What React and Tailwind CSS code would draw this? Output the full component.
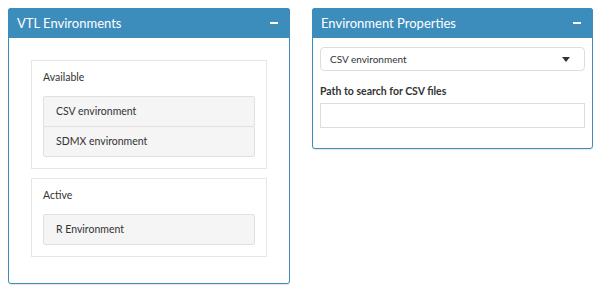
import React from "react";

function Box({ title, className, children }) {
  return (
    <div className={"bg-white border border-[#3c8dbc] rounded-[3px] shadow-[0_1px_1px_rgba(0,0,0,0.1)] " + className}>
      <div className="h-[30px] -mt-px -mx-px bg-[#3c8dbc] rounded-t-[3px] flex items-center justify-between pl-[9px] pr-[12px]">
        <h3 className="text-white text-[13px] leading-none">{title}</h3>
        <span className="block w-[8px] h-[2px] bg-white" />
      </div>
      {children}
    </div>
  );
}

function Panel({ label, items, className }) {
  return (
    <div className={"border border-[#e6e6e6] pt-[8px] pl-[11px] pr-[11px] pb-[11px] " + className}>
      <div className="text-[10.5px] text-[#333] leading-[16px] mb-[12px]">{label}</div>
      {items.map((item) => (
        <div
          key={item}
          className="h-[31px] -mt-px first:mt-0 bg-[#f5f5f5] border border-[#e0e0e0] rounded-[2px] flex items-center pl-[12px] text-[10.5px] text-[#333]"
        >
          {item}
        </div>
      ))}
    </div>
  );
}

export default function App() {
  return (
    <div className="w-[604px] h-[292px] bg-white flex items-start gap-[22px] pt-[8px] pl-[8px] font-['Lato',sans-serif]">
      <Box title="VTL Environments" className="w-[282px] h-[276px]">
        <div className="pt-[22px] pl-[22px] pr-[22px]">
          <Panel label="Available" items={["CSV environment", "SDMX environment"]} />
          <Panel label="Active" items={["R Environment"]} className="mt-[9px]" />
        </div>
      </Box>

      <Box title="Environment Properties" className="w-[281px] h-[141px]">
        <div className="px-[7px] pt-[9px]">
          <div className="h-[24px] border border-[#ddd] rounded-[4px] flex items-center justify-between pl-[9px] pr-[14px]">
            <span className="text-[10px] text-[#333]">CSV environment</span>
            <svg width="8" height="5" viewBox="0 0 8 5">
              <path d="M0 0 H8 L4 5 Z" fill="#333" />
            </svg>
          </div>
          <label className="block mt-[13px] text-[10.5px] font-bold text-[#333] leading-[15px]">
            Path to search for CSV files
          </label>
          <div className="mt-[4px] h-[25px] border border-[#ddd]" />
        </div>
      </Box>
    </div>
  );
}
